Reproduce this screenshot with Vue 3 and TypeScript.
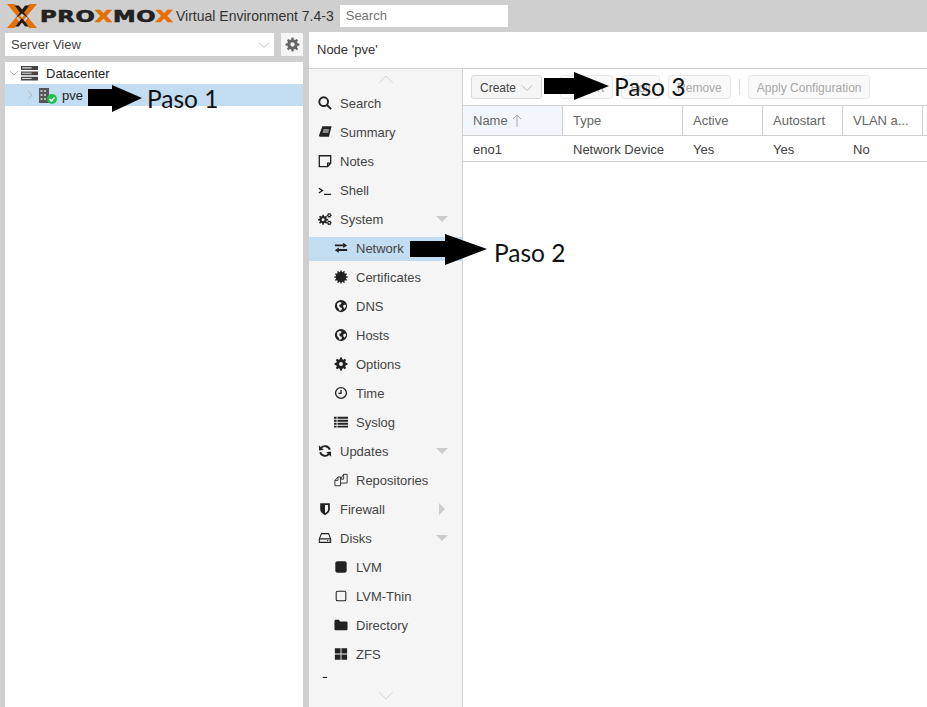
<template>
  <div class="page">
    <header class="topbar">
      <svg class="logo-mark" viewBox="0 0 30 24">
        <path class="orange" d="M0 0h7.5L17 11.5l-3.5 4.5zM0 24h7.5l5-6-3.6-4.6zM30 0h-7.5L13 11.5l3.5 4.5zM30 24h-7.5l-5-6 3.6-4.6z" />
        <path class="dark" d="M7.8 1.5h4L15 5.6 18.2 1.5h4L17 8.4l4.6 6.2L15 9.5 8.4 14.6 13 8.4zM15 14l3 3.8 3.6 4.7h-3.4L15 18.4l-3.2 4.1H8.4l3.6-4.7z" />
      </svg>
      <div class="logo-word"><span>PRO</span><span class="x">X</span><span>MO</span><span class="x">X</span></div>
      <span class="version">Virtual Environment 7.4-3</span>
      <div class="top-search">Search</div>
    </header>

    <div class="main">
      <aside class="left">
        <div class="view-bar">
          <div class="combo">
            <span>Server View</span>
            <svg class="chev" viewBox="0 0 12 8"><path d="M1 1.5l5 5 5-5" /></svg>
          </div>
          <button class="gear-btn">
            <svg class="gear-ico" viewBox="0 0 16 16"><path :d="gear(8, 8, 7.5, 5.6, 8, 2.3)" fill-rule="evenodd" /></svg>
          </button>
        </div>
        <div class="tree">
          <div class="tree-row">
            <svg class="tree-chev" viewBox="0 0 10 10"><path d="M1 3l4 4 4-4" /></svg>
            <svg class="dc-ico" viewBox="0 0 16 14">
              <path d="M0 0h16v3.6H0zM0 5h16v3.6H0zM0 10h16v3.6H0z" fill="#444" />
              <path d="M1 1.2h9v1H1zM1 6.2h9v1H1zM1 11.2h9v1H1z" fill="#ddd" />
            </svg>
            <span>Datacenter</span>
          </div>
          <div class="tree-row selected">
            <svg class="tree-chev child" viewBox="0 0 10 10"><path d="M3 1l4 4-4 4" /></svg>
            <svg class="node-ico" viewBox="0 0 19 18">
              <path d="M1 2h10v15H1z" fill="#555" />
              <path d="M2.500 4h2v2h-2zM6 4h2v2H6zM2.500 8h2v2h-2zM6 8h2v2H6zM2.500 12h2v2h-2zM6 12h2v2H6z" fill="#bbb" />
              <circle cx="14" cy="13" r="5" fill="#21bf4b" />
              <path d="M11.5 13l2 2 3-3.5" fill="none" stroke="#fff" stroke-width="1.5" />
            </svg>
            <span class="pve">pve</span>
          </div>
        </div>
      </aside>

      <section class="right">
        <div class="node-title">Node 'pve'</div>
        <div class="content">
          <nav class="menu">
            <div class="scroll-up">
              <svg viewBox="0 0 16 9"><path d="M1 8l7-7 7 7" /></svg>
            </div>
            <div class="menu-list">
              <div
                v-for="item in menu"
                :key="item.label"
                class="menu-item"
                :class="{ child: item.child, active: item.label === 'Network' }"
              >
                <svg class="ico" viewBox="0 0 16 16">
                  <path
                    v-for="(p, i) in icons[item.icon]"
                    :key="i"
                    :d="p.d"
                    :class="p.w ? 'line' : 'solid'"
                    :stroke-width="p.w"
                    fill-rule="evenodd"
                  />
                </svg>
                <span>{{ item.label }}</span>
                <i v-if="item.open === true" class="tri-down"></i>
                <i v-if="item.open === false" class="tri-right"></i>
              </div>
            </div>
            <div class="scroll-down">
              <svg viewBox="0 0 16 9"><path d="M1 1l7 7 7-7" /></svg>
            </div>
          </nav>

          <div class="panel">
            <div class="toolbar">
              <button class="btn create">Create
                <svg class="chev" viewBox="0 0 12 8"><path d="M1 1.5l5 5 5-5" /></svg>
              </button>
              <button class="btn off revert">Revert</button>
              <button class="btn off">Edit</button>
              <button class="btn off">Remove</button>
              <span class="sep"></span>
              <button class="btn off">Apply Configuration</button>
            </div>
            <div class="grid-head">
              <div
                v-for="col in columns"
                :key="col.label"
                class="cell"
                :class="{ sorted: col.label === 'Name' }"
                :style="{ width: col.width + 'px' }"
              >
                {{ col.label }}
                <svg v-if="col.label === 'Name'" class="sort" viewBox="0 0 10 14"><path d="M5 13V1M1 5l4-4 4 4" /></svg>
              </div>
            </div>
            <div class="grid-row">
              <div
                v-for="(val, i) in row"
                :key="i"
                class="cell"
                :style="{ width: columns[i].width + 'px' }"
              >{{ val }}</div>
            </div>
          </div>
        </div>
      </section>
    </div>

    <svg class="arrow a1" viewBox="0 0 54 27"><path d="M0 4h24V0l30 13-30 14v-6H0z" /></svg>
    <span class="paso p1">Paso 1</span>
    <svg class="arrow a2" viewBox="0 0 77 31"><path d="M0 7h35V0l42 15-42 16v-8H0z" /></svg>
    <span class="paso p2">Paso 2</span>
    <svg class="arrow a3" viewBox="0 0 65 28"><path d="M0 6h30V0l35 14-35 14v-6H0z" /></svg>
    <span class="paso p3">Paso 3</span>
  </div>
</template>

<script setup lang="ts">
// w set = stroked outline of that width, otherwise the part is filled
interface IconPart {
  d: string
  w?: number
}

interface MenuItem {
  label: string
  icon: string
  child?: boolean
  open?: boolean
}

function gear(cx: number, cy: number, outer: number, inner: number, teeth: number, hole: number): string {
  const pts: string[] = []
  const step = (Math.PI * 2) / teeth
  for (let i = 0; i < teeth; i++) {
    const a = i * step
    const list: [number, number][] = [
      [a - step * 0.32, inner],
      [a - step * 0.18, outer],
      [a + step * 0.18, outer],
      [a + step * 0.32, inner],
    ]
    for (const [ang, rad] of list) {
      pts.push(`${(cx + Math.cos(ang) * rad).toFixed(2)} ${(cy + Math.sin(ang) * rad).toFixed(2)}`)
    }
  }
  let d = `M${pts.join('L')}z`
  if (hole > 0) {
    d += `M${cx - hole} ${cy}a${hole} ${hole} 0 1 0 ${hole * 2} 0a${hole} ${hole} 0 1 0 ${-hole * 2} 0z`
  }
  return d
}

const globe = 'M8 1a7 7 0 1 0 0 14A7 7 0 0 0 8 1zM3.400 5.400L6 3.400l2.600.6-.6 2-2 .6.4 2.600 2.600 1-.4 2.400-2 1-1.600-3-1.400-1.600zM10.600 7l2.600-.6.6 2-1.600 2.600-1.600-1.600z'

const icons: Record<string, IconPart[]> = {
  search: [{ d: 'M6.500 1.500a5 5 0 1 0 0 10 5 5 0 0 0 0-10zM10 10l5 5', w: 2.200 }],
  book: [{ d: 'M5 1.500h10.500l-3 12H3C1.600 13.500 1 12.500 1.400 11zM6 5v1.200h6.500V5zM5.500 7.500v1.200h6.500V7.500z' }],
  note: [{ d: 'M1.500 2h13v8.500L11 14.500H1.500zM11 14.500V10.500h3.500', w: 1.500 }],
  shell: [{ d: 'M1 6l4 2.700L1 11.400M7 13h8', w: 1.500 }],
  cogs: [
    { d: gear(5.800, 8.800, 5.800, 4.200, 8, 1.700) },
    { d: gear(12.800, 3.800, 2.900, 2.100, 6, 0.900) },
    { d: gear(12.800, 12.400, 2.900, 2.100, 6, 0.900) },
  ],
  exchange: [{ d: 'M1 4h9.500V2L15 5l-4.500 3V6H1zM15 9H5.500V7.500L1 10.500l4.500 3V11.500H15z' }],
  certificate: [{ d: gear(8, 8, 7.600, 5.900, 12, 0) }],
  globe: [{ d: globe }],
  options: [{ d: gear(8, 8, 7.400, 5.600, 8, 2.200) }],
  time: [{ d: 'M8 1.800a6.200 6.200 0 1 0 0 12.400A6.200 6.200 0 0 0 8 1.800zM8 4.500v4H5', w: 1.500 }],
  list: [{ d: 'M0 2h3v2.200H0zM4 2h12v2.200H4zM0 5.400h3v2.200H0zM4 5.400h12v2.200H4zM0 8.800h3v2.200H0zM4 8.800h12v2.200H4zM0 12.200h3v2.200H0zM4 12.200h12v2.200H4z' }],
  refresh: [
    { d: 'M13.500 6.500A5.800 5.800 0 0 0 3.600 4.400M2.500 9.500a5.800 5.800 0 0 0 9.900 2.100', w: 2.200 },
    { d: 'M1 1.500l.2 5.800 5.400-.8zM15 14.500l-.2-5.800-5.400.8z' },
  ],
  repo: [{ d: 'M1 8.500L4.500 4.500H7.500V14.500H1zM4.500 4.500V8.500H1M7.500 7L11 1.500H15V11.500H7.500M11 1.500V7H7.500', w: 1 }],
  shield: [{ d: 'M2.500 1.500h11v7c0 3-2.800 5-5.500 6.500-2.700-1.500-5.500-3.500-5.500-6.500zM8 3.500v9.200c1.500-1 3.500-2.500 3.500-4.500V3.500z' }],
  hdd: [{ d: 'M1.500 9L4 3h8l2.500 6v4h-13zM1.500 9h13M10.500 11h1M12.500 11h.5', w: 1.200 }],
  lvm: [{ d: 'M4 1.500h8c1.500 0 2.500 1 2.500 2.500v8c0 1.500-1 2.500-2.500 2.500H4c-1.500 0-2.500-1-2.500-2.500V4c0-1.500 1-2.500 2.500-2.500z' }],
  thin: [{ d: 'M4 2.500h8c1 0 1.500.5 1.500 1.500v8c0 1-.5 1.500-1.500 1.500H4c-1 0-1.500-.5-1.500-1.500V4c0-1 .5-1.500 1.500-1.500z', w: 1.200 }],
  folder: [{ d: 'M2 2h3.500l1.500 2h7c.8 0 1.500.7 1.500 1.500v7c0 .8-.7 1.500-1.500 1.500H2c-.8 0-1.500-.7-1.500-1.500v-9C.5 2.700 1.200 2 2 2z' }],
  grid: [{ d: 'M1 1.500h6.500v6H1zM8.500 1.500H15v6H8.500zM1 8.500h6.500v6H1zM8.500 8.500H15v6H8.500z' }],
  ceph: [{ d: 'M5.500 1h5v1.400h-5z' }],
}

const menu: MenuItem[] = [
  { label: 'Search', icon: 'search' },
  { label: 'Summary', icon: 'book' },
  { label: 'Notes', icon: 'note' },
  { label: 'Shell', icon: 'shell' },
  { label: 'System', icon: 'cogs', open: true },
  { label: 'Network', icon: 'exchange', child: true },
  { label: 'Certificates', icon: 'certificate', child: true },
  { label: 'DNS', icon: 'globe', child: true },
  { label: 'Hosts', icon: 'globe', child: true },
  { label: 'Options', icon: 'options', child: true },
  { label: 'Time', icon: 'time', child: true },
  { label: 'Syslog', icon: 'list', child: true },
  { label: 'Updates', icon: 'refresh', open: true },
  { label: 'Repositories', icon: 'repo', child: true },
  { label: 'Firewall', icon: 'shield', open: false },
  { label: 'Disks', icon: 'hdd', open: true },
  { label: 'LVM', icon: 'lvm', child: true },
  { label: 'LVM-Thin', icon: 'thin', child: true },
  { label: 'Directory', icon: 'folder', child: true },
  { label: 'ZFS', icon: 'grid', child: true },
  { label: 'Ceph', icon: 'ceph' },
]

const columns = [
  { label: 'Name', width: 100 },
  { label: 'Type', width: 120 },
  { label: 'Active', width: 80 },
  { label: 'Autostart', width: 80 },
  { label: 'VLAN a...', width: 80 },
  { label: '', width: 40 },
]

const row = ['eno1', 'Network Device', 'Yes', 'Yes', 'No', '']
</script>

<style>
html,
body {
  margin: 0;
  background: #cfcfcf;
}
</style>

<style scoped>
.page {
  position: relative;
  height: 100vh;
  overflow: hidden;
  background: #cfcfcf;
  font-family: "Liberation Sans", Arial, sans-serif;
  font-size: 13px;
  color: #333;
}

.topbar {
  display: flex;
  align-items: center;
  height: 32px;
  padding-left: 7px;
  box-sizing: border-box;
}

.logo-mark {
  width: 30px;
  height: 24px;
  flex: none;
}
.orange {
  fill: #e57000;
}
.dark {
  fill: #1c1c1c;
}

.logo-word {
  width: 132px;
  margin-left: 3px;
  flex: none;
  font-family: "DejaVu Sans", sans-serif;
  font-weight: 700;
  font-size: 16px;
  letter-spacing: 0.5px;
  color: #222;
  -webkit-text-stroke: 0.6px currentColor;
  white-space: nowrap;
  transform: scaleX(1.42);
  transform-origin: left center;
}
.logo-word .x {
  color: #e57000;
}

.version {
  margin-left: 4px;
  font-size: 14px;
  color: #333;
  white-space: nowrap;
}

.top-search {
  width: 168px;
  height: 22px;
  margin-left: 6px;
  padding-left: 6px;
  box-sizing: border-box;
  background: #fff;
  color: #757575;
  line-height: 22px;
}

.main {
  display: flex;
  height: calc(100% - 32px);
}

.left {
  display: flex;
  flex-direction: column;
  width: 298px;
  margin-left: 5px;
  flex: none;
}

.view-bar {
  display: flex;
  gap: 7px;
  height: 23px;
  margin-top: 1px;
}

.combo {
  display: flex;
  align-items: center;
  justify-content: space-between;
  flex: 1;
  padding: 0 4px 0 6px;
  background: #fff;
  color: #444;
}

.chev {
  width: 12px;
  height: 8px;
}
.chev path,
.tree-chev path,
.sort path,
.scroll-up path,
.scroll-down path {
  fill: none;
  stroke: #bbb;
  stroke-width: 1;
}

.gear-btn {
  width: 22px;
  padding: 0;
  border: 0;
  background: #f5f5f5;
  display: flex;
  align-items: center;
  justify-content: center;
}
.gear-ico {
  width: 15px;
  height: 15px;
  fill: #666;
}

.tree {
  flex: 1;
  margin-top: 6px;
  background: #fff;
}

.tree-row {
  position: relative;
  display: flex;
  align-items: center;
  height: 22px;
  color: #222;
}
.tree-row.selected {
  background: #c2ddf2;
}

.tree-chev {
  width: 10px;
  height: 10px;
  margin-left: 4px;
  flex: none;
}
.tree-chev.child {
  margin-left: 20px;
}

.dc-ico {
  width: 17px;
  height: 15px;
  margin-left: 2px;
  margin-right: 8px;
}

.node-ico {
  width: 19px;
  height: 18px;
  margin-left: 3px;
  margin-right: 5px;
}

.pve {
  color: #222;
}

.right {
  display: flex;
  flex-direction: column;
  flex: 1;
  min-width: 0;
  margin-left: 6px;
  background: #fff;
}

.node-title {
  height: 37px;
  padding-left: 8px;
  box-sizing: border-box;
  border-bottom: 1px solid #cfcfcf;
  line-height: 36px;
  color: #333;
  flex: none;
}

.content {
  display: flex;
  flex: 1;
  min-height: 0;
}

.menu {
  display: flex;
  flex-direction: column;
  width: 154px;
  flex: none;
  box-sizing: border-box;
  background: #f5f5f5;
  border-right: 1px solid #cfcfcf;
}

.scroll-up {
  display: flex;
  justify-content: center;
  height: 23px;
  padding-top: 6px;
  box-sizing: border-box;
  flex: none;
}
.scroll-down {
  display: flex;
  justify-content: center;
  align-items: center;
  height: 29px;
  padding-top: 6px;
  box-sizing: border-box;
  flex: none;
}
.scroll-up svg,
.scroll-down svg {
  width: 16px;
  height: 9px;
}
.scroll-up path,
.scroll-down path {
  stroke: #d8d8d8;
}

.menu-list {
  flex: 1;
  min-height: 0;
  overflow: hidden;
}

.menu-item {
  position: relative;
  display: flex;
  align-items: center;
  height: 24px;
  margin-bottom: 5px;
  padding-left: 9px;
  padding-bottom: 2px;
  box-sizing: border-box;
  color: #444;
}
.menu-item.child {
  padding-left: 25px;
}
.menu-item.active {
  background: #c2ddf2;
}

.ico {
  width: 14px;
  height: 14px;
  margin-right: 8px;
  flex: none;
  overflow: visible;
}
.ico .solid {
  fill: #222;
}
.ico .line {
  fill: none;
  stroke: #222;
}

.tri-down,
.tri-right {
  position: absolute;
  width: 0;
  height: 0;
}
.tri-down {
  right: 14px;
  top: 8px;
  border-left: 6px solid transparent;
  border-right: 6px solid transparent;
  border-top: 6px solid #ccc;
}
.tri-right {
  right: 17px;
  top: 5px;
  border-top: 6px solid transparent;
  border-bottom: 6px solid transparent;
  border-left: 6px solid #ccc;
}

.panel {
  flex: 1;
  min-width: 0;
  background: #fff;
  overflow: hidden;
}

.toolbar {
  display: flex;
  align-items: center;
  gap: 8px;
  height: 37px;
  padding-left: 8px;
  box-sizing: border-box;
  border-bottom: 1px solid #cfcfcf;
}

.btn {
  display: flex;
  align-items: center;
  gap: 5px;
  height: 24px;
  padding: 1px 8px 0;
  box-sizing: border-box;
  border: 1px solid #d8d8d8;
  border-radius: 3px;
  background: #f5f5f5;
  font-family: inherit;
  font-size: 12px;
  color: #444;
}
.btn.off {
  color: #a8a8a8;
  border-color: #e8e8e8;
  background: #f9f9f9;
}
.btn.create {
  margin-right: 10px;
}
.sep {
  width: 1px;
  height: 16px;
  background: #ddd;
}

.grid-head,
.grid-row {
  display: flex;
  box-sizing: border-box;
  border-bottom: 1px solid #cfcfcf;
}
.grid-head {
  height: 30px;
  color: #666;
}
.grid-row {
  height: 26px;
  color: #404040;
}
.grid-row .cell {
  padding-top: 1px;
}

.cell {
  display: flex;
  align-items: center;
  gap: 4px;
  padding-left: 10px;
  box-sizing: border-box;
  flex: none;
}
.grid-head .cell {
  border-right: 1px solid #cfcfcf;
}
.grid-head .cell.sorted {
  background: #f0f6fc;
}
.sort {
  width: 10px;
  height: 14px;
}
.sort path {
  stroke: #aaa;
}

.arrow {
  position: absolute;
  fill: #000;
}
.a1 {
  left: 88px;
  top: 85px;
  width: 54px;
  height: 27px;
}
.a2 {
  left: 410px;
  top: 234px;
  width: 77px;
  height: 31px;
}
.a3 {
  left: 544px;
  top: 72px;
  width: 65px;
  height: 28px;
}

.paso {
  position: absolute;
  font-family: Lato, "Open Sans", sans-serif;
  font-size: 24.5px;
  line-height: 30px;
  color: #111;
  white-space: nowrap;
}
.p1 {
  left: 147px;
  top: 84px;
}
.p2 {
  left: 494px;
  top: 238px;
}
.p3 {
  left: 614px;
  top: 72px;
}
</style>
